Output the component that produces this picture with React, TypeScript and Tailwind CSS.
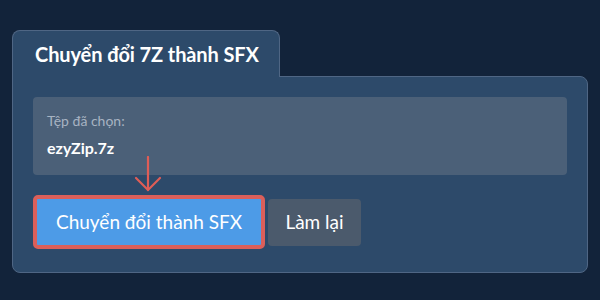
export default function App() {
  return (
    <div className="h-[300px] w-[600px] bg-[#12233a] px-3 pt-[30px] font-['Lato','Noto_Sans',sans-serif]">
      {/* Tab */}
      <div className="relative z-10 -mb-px flex h-[47px] w-[268px] items-center rounded-t-lg border border-b-0 border-[#4f6684] bg-[#2d4a6a] pl-[22px]">
        <h1 className="text-[20px] font-bold tracking-[-0.1px] text-white">Chuyển đổi 7Z thành SFX</h1>
      </div>

      {/* Panel */}
      <div className="relative h-[197px] rounded-b-lg rounded-tr-lg border border-[#4f6684] bg-[#2d4a6a] p-5">
        <div className="flex h-[78px] flex-col rounded-[4px] bg-[#4b6078] px-[14px] pt-[16px]">
          <span className="text-[14px] leading-[16px] text-[#a7b3c2]">Tệp đã chọn:</span>
          <span className="mt-[9px] text-[16px] font-bold leading-[19px] text-white">ezyZip.7z</span>
        </div>

        <div className="relative mt-[20px] flex items-center">
          {/* Pointer arrow */}
          <svg
            className="absolute left-[101px] top-[-39px]"
            width="28"
            height="36"
            viewBox="0 0 28 36"
            fill="none"
            stroke="#df5d57"
            strokeWidth="2.2"
            strokeLinecap="round"
          >
            <path d="M14 1v33" />
            <path d="M2 22l12 12 12-12" />
          </svg>

          <button className="flex h-[54px] w-[232px] items-center justify-center rounded-[5px] border-4 border-[#db5f5a] bg-[#4d9be7] text-[19px] text-white">
            Chuyển đổi thành SFX
          </button>
          <button className="ml-[3px] flex h-[47px] w-[93px] items-center justify-center rounded-[4px] bg-[#4b5a6c] text-[19px] text-white">
            Làm lại
          </button>
        </div>
      </div>
    </div>
  )
}
